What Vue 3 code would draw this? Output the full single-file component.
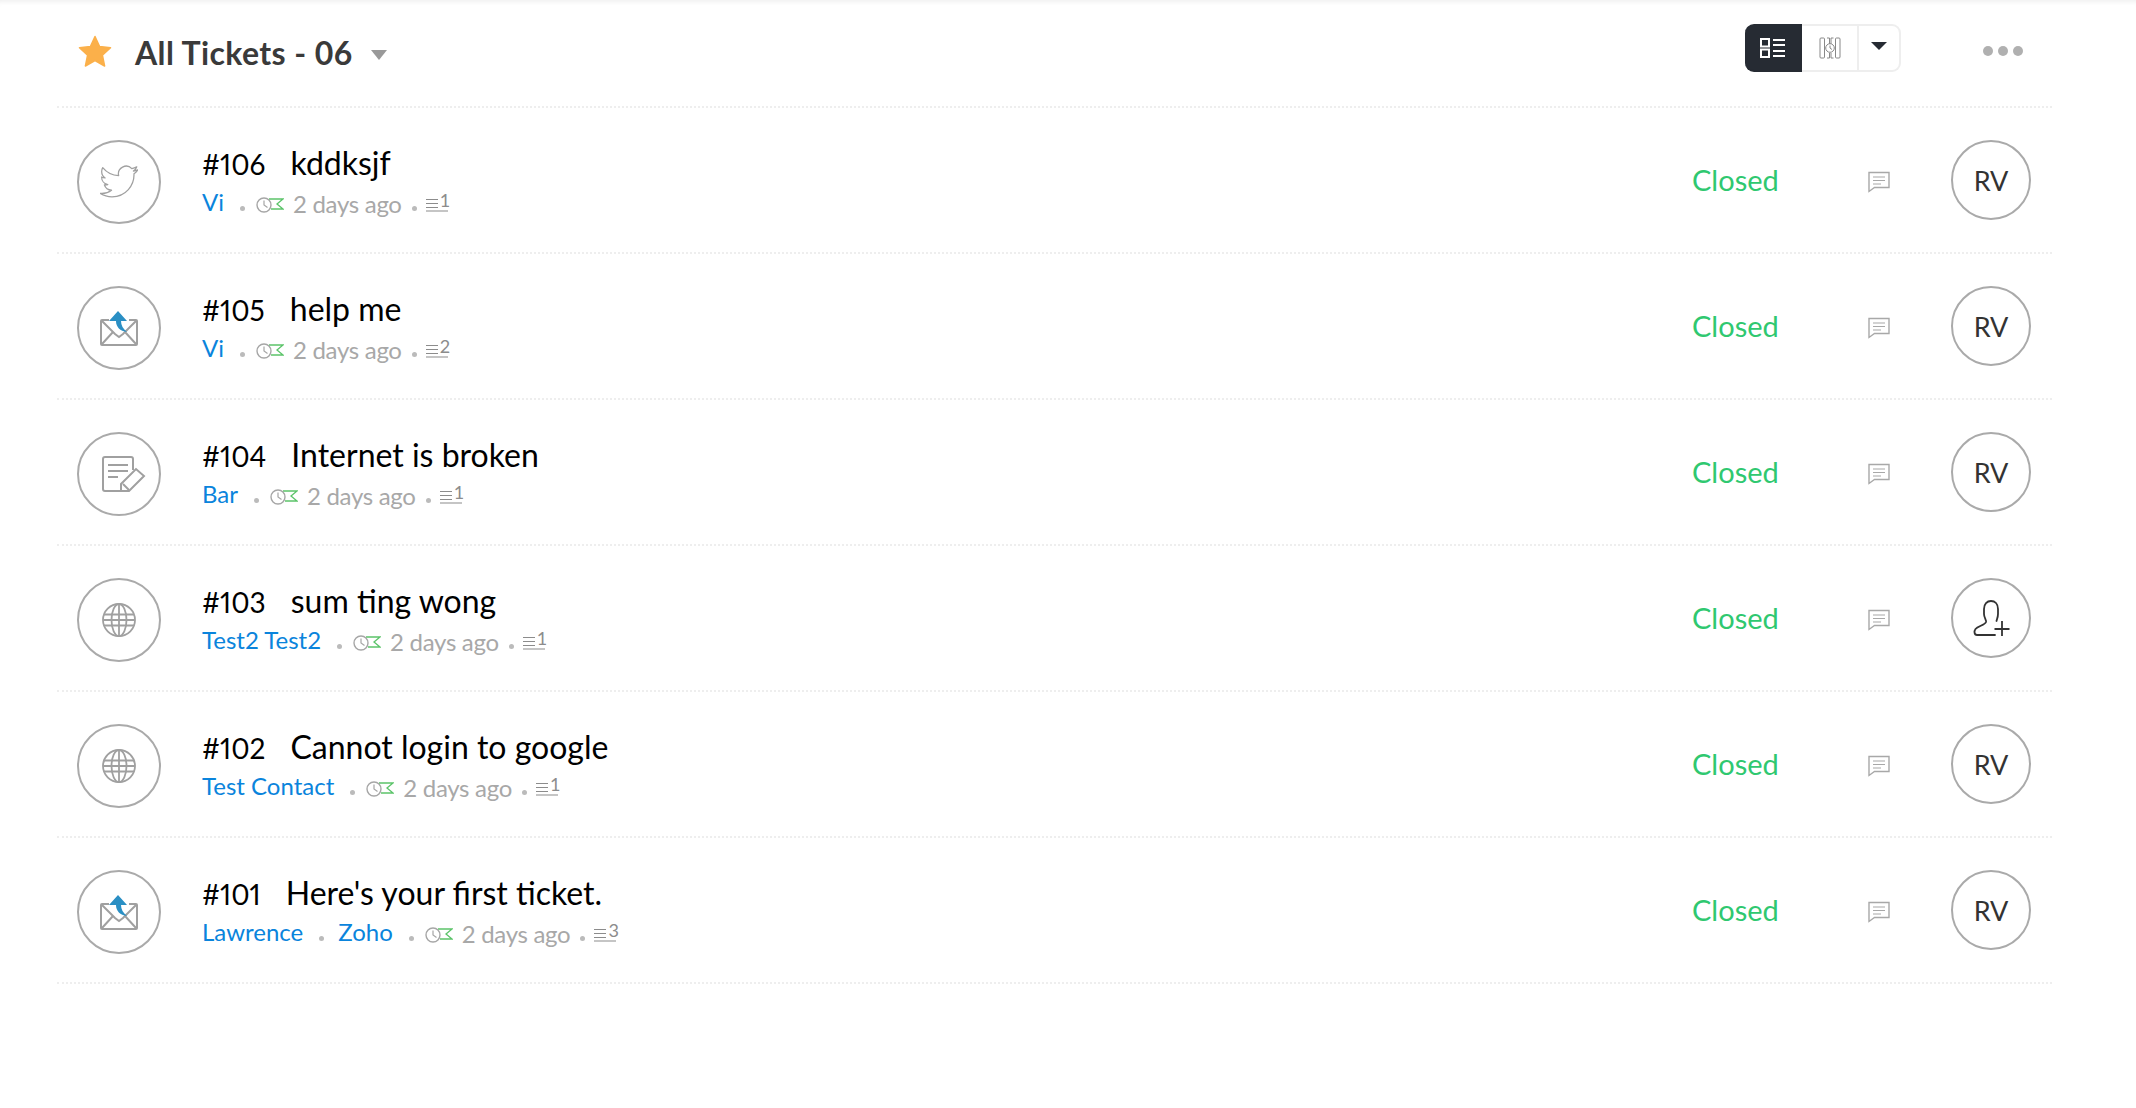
<script setup>
const tickets = [
  { id: 106, subject: 'kddksjf', contacts: ['Vi'], threads: 1, channel: 'twitter', owner: 'RV' },
  { id: 105, subject: 'help me', contacts: ['Vi'], threads: 2, channel: 'mail', owner: 'RV' },
  { id: 104, subject: 'Internet is broken', contacts: ['Bar'], threads: 1, channel: 'form', owner: 'RV' },
  { id: 103, subject: 'sum ting wong', contacts: ['Test2 Test2'], threads: 1, channel: 'web', owner: '' },
  { id: 102, subject: 'Cannot login to google', contacts: ['Test Contact'], threads: 1, channel: 'web', owner: 'RV' },
  { id: 101, subject: "Here's your first ticket.", contacts: ['Lawrence', 'Zoho'], threads: 3, channel: 'mail', owner: 'RV' }
]
</script>

<template>
  <div class="page">
    <header class="head">
      <svg class="star" viewBox="0 0 34 32">
        <path d="M17 1.500l4.600 10 10.900 1.300-8.100 7.400 2.200 10.800L17 25.600 7.400 31l2.200-10.800L1.500 12.800l10.900-1.300z" fill="#fbb04a" stroke="#fbb04a" stroke-width="1.500" stroke-linejoin="round" />
      </svg>
      <h1 class="title">All Tickets - 06</h1>
      <span class="title-caret"></span>

      <div class="views">
        <button class="view view-on">
          <svg width="26" height="20" viewBox="0 0 26 20" fill="none" stroke="#fff" stroke-width="2">
            <rect x="1" y="1" width="8" height="7.500" />
            <rect x="1" y="11.500" width="8" height="7.500" />
            <path d="M13 2h12M13 7h12M13 13h12M13 18h12" />
          </svg>
        </button>
        <button class="view">
          <svg width="22" height="22" viewBox="0 0 22 22" fill="none" stroke="#888" stroke-width="1">
            <rect x="1" y="1" width="4.500" height="20" rx="1" />
            <rect x="16.500" y="1" width="4.500" height="20" rx="1" />
            <path d="M8 1h2.500v6M12 7V1h2.500M8 21h2.500v-5M12 16v5h2.500" />
            <circle cx="11" cy="11" r="4.300" />
            <path d="M11 8.500V11l2 1.500" />
          </svg>
        </button>
        <button class="view view-more"><span class="more-caret"></span></button>
      </div>

      <div class="dots"><i></i><i></i><i></i></div>
    </header>

    <div v-for="t in tickets" :key="t.id" class="row">
      <div class="channel">
        <svg v-if="t.channel === 'twitter'" width="38" height="33" viewBox="0 0 24 21" fill="none" stroke="#a0a0a0" stroke-width=".8" stroke-linejoin="round">
          <g transform="translate(0 -1.500)">
            <path d="M23.953 4.570a10 10 0 01-2.825.775 4.958 4.958 0 002.163-2.723c-.951.555-2.005.959-3.127 1.184a4.920 4.920 0 00-8.384 4.482C7.690 8.095 4.067 6.130 1.640 3.162a4.822 4.822 0 00-.666 2.475c0 1.710.870 3.213 2.188 4.096a4.904 4.904 0 01-2.228-.616v.060a4.923 4.923 0 003.946 4.827 4.996 4.996 0 01-2.212.085 4.936 4.936 0 004.604 3.417 9.867 9.867 0 01-6.102 2.105c-.390 0-.779-.023-1.170-.067a13.995 13.995 0 007.557 2.209c9.053 0 13.998-7.496 13.998-13.985 0-.210 0-.420-.015-.630A9.935 9.935 0 0024 4.590z" />
          </g>
        </svg>
        <svg v-else-if="t.channel === 'mail'" width="38" height="36" viewBox="0 0 38 36" fill="none">
          <path d="M9 10H2a1 1 0 00-1 1v23a1 1 0 001 1h34a1 1 0 001-1V11a1 1 0 00-1-1h-7" stroke="#a0a0a0" stroke-width="2" />
          <path d="M2 11l13 13 4 3 4-3 13-13M2 34l11-12M36 34L25 22" stroke="#a0a0a0" stroke-width="2" />
          <path d="M18 1l9 10h-6c0 4 2 8 6 11-7-1-11-5-11-11H9z" fill="#2a8fc4" />
        </svg>
        <svg v-else-if="t.channel === 'form'" class="form-icon" width="44" height="36" viewBox="0 0 44 36" fill="none" stroke="#a0a0a0" stroke-width="2">
          <path d="M22 35H3a2 2 0 01-2-2V3a2 2 0 012-2h26a2 2 0 012 2v11" />
          <path d="M6 9h20M6 15h20M6 21h10" />
          <path d="M19 35v-7l15-15 8 7-15 15z" />
          <path d="M21 28l6 6" />
        </svg>
        <svg v-else width="34" height="34" viewBox="0 0 34 34" fill="none" stroke="#a0a0a0" stroke-width="1.800">
          <circle cx="17" cy="17" r="16" />
          <ellipse cx="17" cy="17" rx="7.500" ry="16" />
          <path d="M17 1v32M2 11.500h30M1 17h32M2 22.500h30" />
        </svg>
      </div>

      <div class="info">
        <div class="subject"><span class="num">#{{ t.id }}</span>{{ t.subject }}</div>
        <div class="meta">
          <template v-for="c in t.contacts" :key="c">
            <a class="contact">{{ c }}</a>
            <span class="sep"></span>
          </template>
          <svg class="due" width="28" height="18" viewBox="0 0 28 18" fill="none">
            <path d="M13 3h14l-6 5 6 5H15" stroke="#5cc46a" stroke-width="1.300" />
            <circle cx="8" cy="9" r="7" fill="#fff" stroke="#a6a6a6" stroke-width="1.400" />
            <path d="M8 4.500V9l3.500 2.500" stroke="#a6a6a6" stroke-width="1.200" />
          </svg>
          <span class="ago">2 days ago</span>
          <span class="sep sep-tail"></span>
          <span class="threads">
            <svg width="22" height="14" viewBox="0 0 22 14" fill="none" stroke="#8c8c8c" stroke-width="1.200">
              <path d="M0 1.500h12M0 5.500h12M0 9.500h12M0 13h22" />
            </svg>
            <sup>{{ t.threads }}</sup>
          </span>
        </div>
      </div>

      <span class="status">Closed</span>

      <svg class="comment" width="22" height="22" viewBox="0 0 22 22" fill="none" stroke="#a8a8a8">
        <path d="M1 1.500h20v15H6.500L1 20.500z" stroke-width="1.400" />
        <path d="M5 6h12M5 9.500h12M5 13h8" stroke-width="1.200" />
      </svg>

      <div class="owner">
        <template v-if="t.owner">{{ t.owner }}</template>
        <svg v-else width="37" height="37" viewBox="0 0 37 37" fill="none" stroke="#333" stroke-width="1.800" stroke-linecap="round">
          <path d="M22 35H4C1 35 1 31 2.500 29 5 26 12 25 13 22c.500-2-2-4-2-8V9c0-5 3-8 7-8s7 3 7 8v5c0 3-1 5-1.500 7" />
          <path d="M29 21v15M21.500 29h15" stroke-linecap="butt" />
        </svg>
      </div>
    </div>
  </div>
</template>

<style scoped>
.page {
  width: 2136px;
  height: 1108px;
  padding: 0 84px 0 57px;
  box-sizing: border-box;
  background: #fff;
  font-family: Lato, "Open Sans", sans-serif;
  box-shadow: inset 0 5px 4px -3px #f0f0f0;
  overflow: hidden;
}

.head {
  height: 106px;
  display: flex;
  align-items: flex-start;
  border-bottom: 2px dotted #eeeeee;
  padding-left: 21px;
}
.star {
  width: 34px;
  height: 32px;
  margin-top: 35px;
}
.title {
  margin: 33px 0 0 23px;
  font-size: 32px;
  line-height: 40px;
  font-weight: 700;
  letter-spacing: .4px;
  color: #3a3a3a;
}
.title-caret {
  margin: 50px 0 0 18px;
  border-left: 8px solid transparent;
  border-right: 8px solid transparent;
  border-top: 10px solid #999;
}

.views {
  margin: 24px 0 0 auto;
  height: 48px;
  display: flex;
}
.view {
  width: 57px;
  height: 48px;
  padding: 0;
  display: flex;
  align-items: center;
  justify-content: center;
  background: #fff;
  border: 2px solid #eee;
  border-left: 0;
}
.view-on {
  width: 57px;
  background: #262b33;
  border-color: #262b33;
  border-radius: 9px 0 0 9px;
}
.view-more {
  width: 42px;
  border-radius: 0 9px 9px 0;
}
.more-caret {
  border-left: 8px solid transparent;
  border-right: 8px solid transparent;
  border-top: 8px solid #262b33;
  margin-top: -4px;
}
.dots {
  margin: 46px 29px 0 82px;
  display: flex;
  gap: 5px;
}
.dots i {
  width: 10px;
  height: 10px;
  border-radius: 50%;
  background: #b0b0b0;
}

.row {
  height: 144px;
  display: flex;
  align-items: center;
  border-bottom: 2px dotted #eeeeee;
  padding-left: 20px;
}
.channel {
  width: 80px;
  height: 80px;
  flex: none;
  margin-top: 3px;
  border: 2px solid #aaa;
  border-radius: 50%;
  display: flex;
  align-items: center;
  justify-content: center;
}
.form-icon {
  margin-left: 10px;
}
.info {
  margin-left: 41px;
}
.subject {
  font-size: 32px;
  line-height: 40px;
  color: #000;
  margin-bottom: 2px;
}
.num {
  margin-right: 25px;
  font-size: 28px;
  font-variant-numeric: proportional-nums;
}
.meta {
  display: flex;
  align-items: center;
  height: 32px;
  font-size: 24px;
}
.contact {
  color: #0a84dc;
}
.sep {
  width: 5px;
  height: 5px;
  margin: 14px 11px 0 16px;
  border-radius: 50%;
  background: #bbb;
}
.sep + .contact {
  margin-left: 3px;
}
.sep-tail {
  margin: 14px 9px 0 10px;
}
.due {
  margin: 6px 9px 0 0;
}
.ago {
  margin-top: 4px;
  letter-spacing: -.3px;
  color: #a8a8a8;
}
.threads {
  position: relative;
  display: flex;
  width: 24px;
  margin-top: 6px;
  color: #8c8c8c;
}
.threads sup {
  position: absolute;
  left: 14px;
  top: -7px;
  font-size: 18px;
  line-height: 18px;
}

.status {
  margin-left: auto;
  margin-top: -1px;
  width: 176px;
  font-size: 29px;
  color: #2fc870;
}
.comment {
  flex: none;
  margin-top: 4px;
}
.owner {
  width: 76px;
  height: 76px;
  flex: none;
  margin: 0 21px 0 61px;
  border: 2px solid #aaa;
  border-radius: 50%;
  display: flex;
  align-items: center;
  justify-content: center;
  font-size: 27px;
  color: #333;
}
</style>
